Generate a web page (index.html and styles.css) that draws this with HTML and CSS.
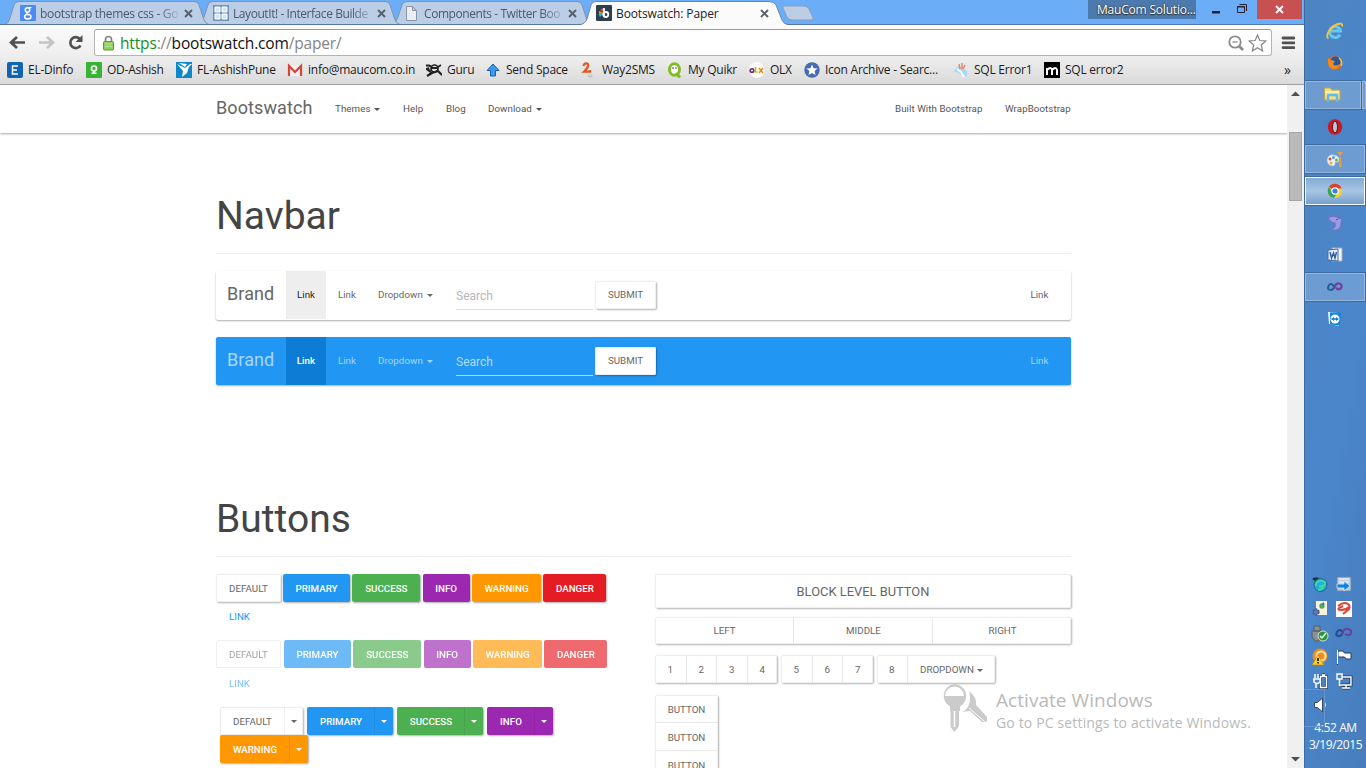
FILE: index.html
```html
<!DOCTYPE html>
<html lang="en">
<head>
<meta charset="utf-8">
<title>Bootswatch: Paper</title>
<link rel="stylesheet" href="styles.css">
</head>
<body>
<div class="desktop">
<div class="window">
  <header class="tabstrip">
    <svg class="tab-shapes" width="1304" height="27" viewBox="0 0 1304 27">
      <g fill="#bbcee6" stroke="#7b93b4">
        <path d="M392 24.5Q396 23 398 17L402 5Q403 1.5 407 1.5H577Q581 1.5 582 5L587 20Q588 24 592 24.5Z"/>
        <path d="M198 24.5Q202 23 204 17L208 5Q209 1.500 213 1.500H385Q389 1.500 390 5L395 20Q397 24 400 24.500Z"/>
        <path d="M5 24.5Q9 23 10 18L14 5Q15 1.500 19 1.500H194Q198 1.500 199 5L204 20Q206 24 209 24.500Z"/>
        <path d="M783 8Q782 6 785 6H803Q807 6 809 9L813 18Q814 20 811 20H793Q788 20 787 17Z" stroke="#8aa0bd"/>
      </g>
      <path d="M0 24.500H1304" stroke="#5578a8"/>
      <path d="M580 27V25Q585 24 587 19L591 5Q592 1.500 596 1.500H769Q774 1.500 776 5L782 20Q784 24 788 25V27Z" fill="#fbfbfb"/>
      <path d="M580 24.500Q585 24 587 19L591 5Q592 1.500 596 1.500H769Q774 1.500 776 5L782 20Q784 24.500 788 24.500" fill="none" stroke="#6a86ab"/>
    </svg>
    <div class="tab t1"><svg width="16" height="16"><rect width="16" height="16" rx="1" fill="#4c8bf5"/><g fill="none" stroke="#fff" stroke-width="1.500"><circle cx="7.500" cy="5" r="2.200"/><ellipse cx="7.800" cy="11.700" rx="3.200" ry="2.200"/><path d="M8.500 2.700h3M7 7.500q-1 1 1.500 2" stroke-width="1.200"/></g></svg><span>bootstrap themes css - Go</span><svg class="x" width="9" height="9"><path d="M1 1l7 7M8 1l-7 7"/></svg></div>
    <div class="tab t2"><svg width="16" height="16"><rect x=".5" y=".5" width="15" height="15" fill="#6f94bc" stroke="#7394b5"/><path d="M2 2h5v5H2zM9 2h5v5H9zM2 9h5v5H2zM9 9h5v5H9z" fill="#d5e5f5" stroke="#fff"/></svg><span>LayoutIt! - Interface Builde</span><svg class="x" width="9" height="9"><path d="M1 1l7 7M8 1l-7 7"/></svg></div>
    <div class="tab t3"><svg width="16" height="16"><path d="M2.500 1.500h6l4 4v10h-10zM8.500 1.500v4h4" fill="#e9eef5" stroke="#8a94a2"/></svg><span>Components - Twitter Boo</span><svg class="x" width="9" height="9"><path d="M1 1l7 7M8 1l-7 7"/></svg></div>
    <div class="tab t4"><svg width="16" height="16"><rect width="16" height="16" rx="1" fill="#2c3e50"/><path d="M7 3v4L4 5z" fill="#e84c3d"/><path d="M3 6l5 2-5 1z" fill="#f39c12"/><path d="M2.500 9l5-.5L4 12z" fill="#3eb0e8"/><path d="M8 3v9" stroke="#fff" stroke-width="1.800"/><circle cx="9.800" cy="9.500" r="2.500" fill="none" stroke="#fff" stroke-width="1.800"/></svg><span>Bootswatch: Paper</span><svg class="x" width="9" height="9"><path d="M1 1l7 7M8 1l-7 7"/></svg></div>
    <div class="profile">MauCom Solutio...</div>
    <svg class="winctl" width="55" height="19"><path d="M12 11h8v2.500h-8z" fill="#223"/><path d="M37.500 6.500h7v6h-7zM37 7h8M39.500 4.500h7V11" fill="none" stroke="#223"/></svg>
    <div class="close"><svg width="9" height="9"><path d="M1 1l7 7M8 1l-7 7" stroke="#fff" stroke-width="1.900"/></svg></div>
  </header>

  <div class="toolbar">
    <svg width="94" height="30" viewBox="0 0 94 30" fill="none">
      <path d="M11 15.500h14M17 10l-6 5.500 6 5.500" stroke="#505050" stroke-width="2.700"/>
      <path d="M39 15.500h13M47 10l6 5.500-6 5.500" stroke="#c3c3c3" stroke-width="2.700"/>
      <path d="M80.500 18.500a5.500 5.500 0 1 1-.5-6.500" stroke="#505050" stroke-width="2.700"/><path d="M82.500 8v7h-7z" fill="#505050"/>
    </svg>
    <div class="omnibox">
      <svg width="13" height="16"><path d="M3.500 8V4.500a3 3 0 0 1 6 0V8" fill="none" stroke="#858585" stroke-width="1.700"/><rect x="1.500" y="6.500" width="10" height="8.500" rx="1" fill="#8fd05e" stroke="#529f35"/><path d="M3 9h7M3 11.500h7" stroke="#b7e994"/></svg>
      <span class="url"><b>https</b><i>://</i>bootswatch.com<i>/paper/</i></span>
      <svg class="omni-icons" width="44" height="22" fill="none"><g stroke="#8b8b8b"><circle cx="11" cy="10" r="5.700" stroke-width="1.800"/><path d="M15 14l4 4" stroke-width="2.800"/><path d="M8.500 10h5" stroke-width="1.300"/></g><path d="M33.500 3l2.300 5.500 6 .5-4.500 4 1.300 6-5.100-3.200-5.100 3.200 1.300-6-4.500-4 6-.5z" fill="#fff" stroke="#858585" stroke-width="1.200"/></svg>
    </div>
    <svg class="menu" width="14" height="14"><path d="M2 2h11M2 6.800h11M2 11.600h11" stroke="#515151" stroke-width="2.800" stroke-linecap="round"/></svg>
  </div>

  <nav class="bookmarks">
    <a><svg width="16" height="16"><rect width="16" height="16" rx="2" fill="#0f65b0"/><path d="M11 4H5.500v8H11M5.500 8H10" fill="none" stroke="#fff" stroke-width="1.500"/></svg>EL-Dinfo</a>
    <a><svg width="16" height="16"><rect width="16" height="16" rx="1" fill="#38b335"/><circle cx="8" cy="6.500" r="2.500" fill="none" stroke="#fff" stroke-width="1.600"/><path d="M5.500 11.300h5M8 9v2" stroke="#fff" stroke-width="1.500"/></svg>OD-Ashish</a>
    <a><svg width="16" height="16"><rect width="16" height="16" fill="#0c87c9"/><path d="M1 2l8 4 5-4h2l-3 3-2 6-5 4 1-6zM3 1l6 4 2-3z" fill="#fff"/></svg>FL-AshishPune</a>
    <a><svg width="16" height="16"><path d="M1 3h14v11H1z" fill="#f2f2f2"/><path d="M2 14V4l6 6 6-6v10" fill="none" stroke="#d84437" stroke-width="2.200"/></svg>info@maucom.co.in</a>
    <a><svg width="16" height="16" fill="none" stroke="#222"><path d="M0 3.500h3l2 1M3 12l9-3 4 4M1 14l5-3M3 6l-2 1 4 3" stroke-width="2.200"/><circle cx="8.500" cy="6.500" r="3.500" stroke-width="1.700"/><path d="M5 6h7M12 5l3-2" stroke-width="1.800"/></svg>Guru</a>
    <a><svg width="16" height="16"><path d="M8 2l6 6.500h-3.500V14h-5V8.500H2z" fill="#3d98ee" stroke="#1764b4"/></svg>Send Space</a>
    <a><svg width="16" height="16"><path d="M2.500 4Q3 1.300 5 1.300 8 1.300 7 4.500 6 7 3 9.700H9V8" fill="none" stroke="#e2581d" stroke-width="2.200"/><path d="M7 12l4 1 1 2-3 1-2-1z" fill="#c5c9c8"/></svg>Way2SMS</a>
    <a><svg width="16" height="16"><ellipse cx="7.500" cy="7.500" rx="5" ry="5.700" fill="#fff" stroke="#83bd25" stroke-width="3"/><circle cx="6" cy="6" r=".7"/><circle cx="9" cy="6" r=".7"/><path d="M9 11l4 4.500" stroke="#83bd25" stroke-width="3"/></svg>My Quikr</a>
    <a><svg width="16" height="16"><circle cx="8" cy="8" r="7.700" fill="#fff"/><g fill="none" stroke-width="1.600"><circle cx="3" cy="8.500" r="1.800" stroke="#61297e"/><path d="M6.500 5v5h2" stroke="#b4be25"/><path d="M10 6l4 5M14 6l-4 5" stroke="#ed8b19"/></g></svg>OLX</a>
    <a><svg width="16" height="16"><circle cx="8" cy="8" r="7.700" fill="#466bb1"/><path d="M8 2.500l1.600 3.700 4 .3-3 2.600.9 4L8 11l-3.500 2.100.9-4-3-2.600 4-.3z" fill="#fff"/></svg>Icon Archive - Searc...</a>
    <a><svg width="16" height="16"><path d="M1 9l4-5 5 1 4 5v5l-5-2z" fill="#a5d9f5"/><path d="M6 2l1 5M9 1v6M12 3L10 7" stroke="#ef835e" stroke-width="1.400"/><path d="M4 7l4 3 3 5" stroke="#fff" stroke-width="2" fill="none"/></svg>SQL Error1</a>
    <a><svg width="16" height="16"><rect width="16" height="16"/><path d="M3 13V6M3 8q4-4 5 0v5M8 8q4-4 5 0v5" fill="none" stroke="#fff" stroke-width="2"/></svg>SQL error2</a>
    <span class="more">»</span>
  </nav>

  <div class="viewport">
    <div class="page">
      <div class="topnav"><div class="container topnav-in">
        <span class="brand">Bootswatch</span>
        <a class="n1">Themes<i class="caret"></i></a><a class="n2">Help</a><a class="n3">Blog</a><a class="n4">Download<i class="caret"></i></a>
        <a class="r1">Built With Bootstrap</a><a>WrapBootstrap</a>
      </div></div>
      <main class="container">
        <h1>Navbar</h1>
        <div class="navbar">
          <span class="brand">Brand</span><a class="active">Link</a><a class="l2">Link</a><a class="dd">Dropdown<i class="caret"></i></a><span class="search">Search</span><span class="btn default submit">SUBMIT</span><a class="last">Link</a>
        </div>
        <div class="navbar inverse">
          <span class="brand">Brand</span><a class="active">Link</a><a class="l2">Link</a><a class="dd">Dropdown<i class="caret"></i></a><span class="search">Search</span><span class="btn default submit">SUBMIT</span><a class="last">Link</a>
        </div>
        <h1 class="second">Buttons</h1>
        <div class="columns">
          <section class="left">
            <div class="row"><span class="btn default w65">DEFAULT</span><span class="btn primary w67">PRIMARY</span><span class="btn success w68">SUCCESS</span><span class="btn info w47">INFO</span><span class="btn warning w69">WARNING</span><span class="btn danger w63">DANGER</span></div>
            <div class="link">LINK</div>
            <div class="row disabled"><span class="btn default w65">DEFAULT</span><span class="btn primary w67">PRIMARY</span><span class="btn success w68">SUCCESS</span><span class="btn info w47">INFO</span><span class="btn warning w69">WARNING</span><span class="btn danger w63">DANGER</span></div>
            <div class="link faded">LINK</div>
            <div class="splits">
              <span class="split default"><b class="w64">DEFAULT</b><em><i class="caret"></i></em></span>
              <span class="split primary"><b class="w67">PRIMARY</b><em><i class="caret"></i></em></span>
              <span class="split success"><b class="w67">SUCCESS</b><em><i class="caret"></i></em></span>
              <span class="split info"><b class="w47">INFO</b><em><i class="caret"></i></em></span>
              <span class="split warning"><b class="w69">WARNING</b><em><i class="caret"></i></em></span>
            </div>
          </section>
          <section class="right">
            <div class="btn default block">BLOCK LEVEL BUTTON</div>
            <div class="group justified"><span>LEFT</span><span>MIDDLE</span><span>RIGHT</span></div>
            <div class="groups"><div class="group"><span>1</span><span>2</span><span>3</span><span>4</span></div><div class="group"><span>5</span><span>6</span><span>7</span></div><div class="group"><span>8</span><span class="wide">DROPDOWN<i class="caret"></i></span></div></div>
            <div class="group vertical"><span>BUTTON</span><span>BUTTON</span><span>BUTTON</span></div>
          </section>
        </div>
      </main>
    </div>
    <div class="scrollbar"><svg width="17" height="17"><path d="M4 11h9L8.500 6.500z" fill="#505050"/></svg><div class="thumb"></div><svg width="17" height="17"><path d="M4 6h9l-4.500 4.500z" fill="#505050"/></svg></div>
  </div>
</div>

<aside class="taskbar">
  <div class="task"><svg width="18" height="18" viewBox="0 0 18 18"><path d="M14 12.500A5.500 5.500 0 1 1 14.500 9H5" fill="none" stroke="#65c8f3" stroke-width="3"/><path d="M2.500 16.500C-1.500 14 4 5 12 2q5-1.500 4 2.500" fill="none" stroke="#f4c53c" stroke-width="1.900"/></svg></div>
  <div class="task"><svg width="16" height="16"><circle cx="8" cy="8" r="7" fill="#e66b16"/><circle cx="8.500" cy="6.500" r="5" fill="#245996"/><path d="M1 3l3 2 4 1-2 3q2 3 7 0-2 5-7 5Q0 13 1 3" fill="#f28a20"/><path d="M12 3q4 3 2 8" stroke="#f9c440" stroke-width="1.500" fill="none"/></svg></div>
  <div class="task-pair"><div class="task open stacked"><svg width="18" height="16"><path d="M1.500 2q0-1 1-1H7l2 2h7q1 0 1 1v9h-15.500z" fill="#f4dc84" stroke="#c6a44b"/><path d="M2 5h14" stroke="#fff4bb" stroke-width="2"/><path d="M5 15V9q0-1 1-1h7q1 0 1 1v6" fill="none" stroke="#63bae6" stroke-width="2.500"/></svg></div><div class="sliver"></div></div>
  <div class="task"><svg width="16" height="18"><ellipse cx="8" cy="9" rx="7.200" ry="7.800" fill="#c51c22"/><ellipse cx="8" cy="9" rx="2.500" ry="5.700" fill="#b5c9df" stroke="#8b090f"/></svg></div>
  <div class="task open"><svg width="18" height="17"><path d="M1 9Q2 3 8 4t5 6q-1 2-4 1 1 4-3 4-5-1-5-6z" fill="#eaf2f2" stroke="#a9bdc5" stroke-width=".7"/><g><circle cx="4" cy="8" r="1.500" fill="#d05142"/><circle cx="7.500" cy="6.500" r="1.500" fill="#4b9eda"/><circle cx="10.500" cy="9" r="1.500" fill="#66b44c"/><circle cx="5" cy="12" r="1.500" fill="#e7b530"/></g><path d="M13.500 6l-.5 10h2.500l-.5-10zM11 1l3 4 3-4z" fill="#eb9d42"/></svg></div>
  <div class="task open current"><svg width="16" height="16"><circle cx="8" cy="8" r="7" fill="#f9ce2e"/><path d="M8 8L2 4a7 7 0 0 1 12.500 1.500H8z" fill="#df3f31"/><path d="M2 4a7 7 0 0 0 5 11l3-5-4.500-1z" fill="#36a25b"/><circle cx="8" cy="8" r="3.200" fill="#3e7de3" stroke="#fff" stroke-width="1.200"/></svg></div>
  <div class="task"><svg width="16" height="16"><path d="M1 3q6-4 12 1l2-1-1 5q0 6-5 7H3q7-2 5-7-4 0-7-5z" fill="#9a9be3" stroke="#7472bd"/><circle cx="10" cy="4.500" r=".8" fill="#454384"/></svg></div>
  <div class="task"><svg width="16" height="16"><path d="M5 1h10v13H5z" fill="#f2f5fa" stroke="#a0adc2"/><path d="M1 3l10-1v12L1 13z" fill="#e9effa" stroke="#456aa3"/><path d="M3 5l1.500 6L6.500 6 8 11 9.500 5" fill="none" stroke="#315da5" stroke-width="1.500"/></svg></div>
  <div class="task open"><svg width="16" height="10" fill="none"><path d="M7 4Q3 0 1.500 4T4 8q2 0 4-4" stroke="#226198" stroke-width="2"/><path d="M7 6q2-5 5-4.500T14.500 5Q13 9 9 6" stroke="#753d9b" stroke-width="2.200"/></svg></div>
  <div class="task"><svg width="16" height="16"><path d="M1 1l11 1v13L2 13z" fill="#eaf6fd"/><path d="M3 1.500h11l-1 13-10-1z" fill="#1385dd"/><circle cx="8" cy="8" r="4.500" fill="#fff"/><path d="M4 8l3-2v1.300h2V6l3 2-3 2V8.700H7V10z" fill="#1778ca"/></svg></div>

  <div class="tray">
    <svg width="18" height="18"><circle cx="9.500" cy="9" r="6.500" fill="#22aedb" stroke="#166a83"/><path d="M5 10q0-5 5-5t4 3q-1 3-6 2M7 14q3 0 5-3" fill="none" stroke="#45dd9a" stroke-width="1.700"/><path d="M1 3q3-3 7-1L4 5z" fill="#20333c"/></svg>
    <svg width="18" height="18"><path d="M2 1h14v14H2z" fill="#bccddf" stroke="#6686aa"/><path d="M4 3h10M4 6h10" stroke="#fff"/><path d="M2 8h7V5l6 5-6 5v-3H2z" fill="#1485dd" stroke="#e8f5ff" stroke-width=".7"/></svg>
    <svg width="18" height="18"><path d="M5 1h11v14H5z" fill="#f5f3da"/><circle cx="11" cy="6" r="2.700" fill="#56a953"/><path d="M11 5l2-2" stroke="#3579d1" stroke-width="2"/><circle cx="5" cy="12" r="2.800" fill="#6475bc" stroke="#435397" stroke-dasharray="2 1" stroke-width="1.700"/></svg>
    <svg width="18" height="18"><rect x="1" y="1" width="16" height="16" fill="#fff"/><path d="M3 6Q8 2 12 3.500t2 5.500L8 14M14 7q-3 3-8 3-4 0-2-2l4-2" fill="none" stroke="#df4437" stroke-width="2"/></svg>
    <svg width="18" height="18"><path d="M3 2h6v5H3zM1 7h9v6l-3 4H4l-3-4z" fill="#8b8f94" stroke="#555e68"/><circle cx="12" cy="12" r="5" fill="#2a9636" stroke="#c9eac9"/><path d="M9 12l2 2 4-5" fill="none" stroke="#fff" stroke-width="1.500"/></svg>
    <svg width="18" height="18" fill="none"><path d="M8 8q-4-4-6 0t2 4q3 0 4-4" stroke="#244d8d" stroke-width="2"/><path d="M7 10q2-6 6-5t3 4q-1 4-6 1" stroke="#6b3e9f" stroke-width="2"/></svg>
    <svg width="18" height="18"><circle cx="9" cy="8" r="7.500" fill="#ed8e1a"/><circle cx="10" cy="8" r="4.500" fill="none" stroke="#ffe1ac" stroke-width="2"/><path d="M7 7l6 10H1z" fill="#f9cf25" stroke="#b97700" stroke-width=".5"/><path d="M7 10v3M7 14v1.500" stroke="#111" stroke-width="1.600"/></svg>
    <svg width="18" height="18" fill="none"><path d="M2.500 2v15M3 3h5q1 3 4 2h4v6h-5q-1-3-4-2H3z" fill="#fff" stroke="#283a52"/><path d="M2.500 2v14" stroke="#fff"/></svg>
    <svg width="18" height="18" fill="none"><path d="M9.500 4.500h6v11h-6zM11 3h3" stroke="#243a55" stroke-width="3"/><path d="M9.500 4.500h6v11h-6zM11 3h3M4 2v4M7 2v4M2 7h7v3q-3 3-6 0V7M5 11v5" stroke="#fff" stroke-width="1.500"/></svg>
    <svg width="18" height="18" fill="none"><path d="M7 5h9v8H5M11 13v3M7 16h8" stroke="#243a55" stroke-width="3"/><path d="M7 5h9v8H5M11 13v3M7 16h8M2 2h5v5H2zM4.500 7v7" stroke="#fff" stroke-width="1.400"/></svg>
    <svg width="18" height="18" fill="none"><path d="M3.500 6.500h3l5-4.500v14l-5-4.500h-3z" fill="#fff" stroke="#344a66"/><path d="M13.500 6q2 3 0 6" stroke="#e4edf8"/></svg>
    <i class="ghost"></i>
  </div>
  <div class="clock"><span>4:52 AM</span><span>3/19/2015</span></div>
</aside>

<div class="watermark">
  <svg width="48" height="50"><g fill="#cbcbcb"><path d="M27 7q8 6 7 14l11 12v5h-5l-12-11-8 1q6-3 7-8 2-7 0-13z"/><path d="M27 24l16 14" stroke="#fff" stroke-width="1"/><path fill-rule="evenodd" d="M12.500 0A12 12 0 0 1 18 22.500V27h-1v15l-4.500 6-4-5V27H8v-4.500A12 12 0 0 1 12.500 0zM3 12H22A9.500 9.500 0 0 0 3 12z"/><path d="M12.500 27v16" stroke="#fff" stroke-width="1.500"/></g></svg>
  <div><p class="wm1">Activate Windows</p><p class="wm2">Go to PC settings to activate Windows.</p></div>
</div>
</div>
</body>
</html>
```
FILE: styles.css
```css
* { box-sizing: border-box; }
body { margin: 0; overflow: hidden; font-family: Roboto, sans-serif; }
.desktop { position: relative; display: flex; width: 1366px; height: 768px; overflow: hidden; }
.window { display: flex; flex-direction: column; width: 1304px; height: 768px; background: #fff; }
svg { flex: none; display: block; }

.tabstrip { position: relative; display: flex; height: 25px; background: #6badf6; font: 12px "Open Sans", sans-serif; }
.tab-shapes { position: absolute; left: 0; top: 0; }
.tab { position: relative; display: flex; align-items: center; height: 26px; padding-left: 20px; color: #4c5968; letter-spacing: -.43px; }
.tab span { margin-left: 4px; width: 140px; flex: none; white-space: nowrap; -webkit-mask-image: linear-gradient(90deg, #000 85%, rgba(0,0,0,.1)); mask-image: linear-gradient(90deg, #000 85%, rgba(0,0,0,.1)); }
.tab .x { margin-left: 4px; }
.x path { stroke: #56606c; stroke-width: 1.9; }
.t1 { width: 193px; letter-spacing: -.33px; }
.t2 { width: 191px; }
.t3 { width: 192px; }
.t4 { width: 193px; padding-left: 20px; color: #222; letter-spacing: -.12px; }
.t4 span { -webkit-mask-image: none; mask-image: none; }
.profile { position: relative; margin-left: 319px; width: 108px; height: 19px; padding-left: 9px; background: #4d7aae; color: #fff; line-height: 19px; text-shadow: 0 0 2px #222, 0 1px 1px #333; white-space: nowrap; letter-spacing: -.2px; }
.winctl { position: relative; margin-left: 4px; }
.close { position: relative; margin-left: 2px; width: 45px; height: 19px; display: flex; justify-content: center; align-items: center; background: #c75050; }

.toolbar { position: relative; display: flex; align-items: flex-start; height: 33px; padding-top: 2px; background: linear-gradient(#fbfbfb, #ededed); }
.omnibox { display: flex; align-items: center; width: 1178px; height: 27px; margin-top: 2px; padding: 0 3px 0 7px; border: 1px solid #b4b4b4; border-top-color: #9c9c9c; border-radius: 3px; background: #fff; }
.url { margin-left: 5px; font: 15.5px/20px "Open Sans", sans-serif; color: #111; letter-spacing: -.16px; }
.url b { font-weight: 400; color: #158f15; }
.url i { font-style: normal; color: #858585; }
.omni-icons { margin-left: auto; }
.menu { margin: 9px 0 0 9px; }

.bookmarks { display: grid; grid-template-columns: 79px 90px 111px 139px 59px 96px 86px 82px 55px 149px 91px 240px auto; height: 27px; padding: 0 0 3px 7px; background: linear-gradient(#ededed, #dadada); border-bottom: 1px solid #a1a1a1; align-items: center; font: 12px "Open Sans", sans-serif; color: #1c1c1c; letter-spacing: -.24px; white-space: nowrap; }
.bookmarks a { display: flex; align-items: center; gap: 5px; }
.more { font-size: 14px; margin-top: -1px; }

.viewport { display: flex; height: 683px; }
.page { width: 1287px; overflow: hidden; background: #fff; }
.scrollbar { display: flex; flex-direction: column; width: 17px; background: #f0f0f0; }
.thumb { margin: 30px 2px 541px; width: 13px; height: 69px; flex: none; background: #bababa; border: 1px solid #a5a5a5; }
.scrollbar svg + .thumb + svg { margin-top: 9px; }
.container { width: 855px; margin-left: 216px; }
.topnav { height: 48px; background: #fff; box-shadow: 0 1px 2px rgba(0,0,0,.35); }
.topnav-in { display: flex; align-items: center; height: 47px; font-size: 9.75px; color: #555; letter-spacing: .06px; }
.brand { font-size: 18px; color: #666; }
.topnav a { white-space: nowrap; }
.topnav .brand { width: 119px; margin-top: -2px; letter-spacing: .1px; }
.n1 { width: 68px; }
.n2 { width: 43px; }
.n3 { width: 42px; }
.n4 { width: 407px; }
.r1 { width: 110px; }
.caret { display: inline-block; width: 0; height: 0; margin-left: 3px; vertical-align: 1px; border: 3px solid transparent; border-top-color: currentColor; border-bottom: 0; }
.topnav .caret, .dd .caret { margin-left: 4px; }

h1 { margin: 0 0 17px; padding-top: 58px; height: 121px; border-bottom: 1px solid #eee; font-size: 39px; line-height: 50px; font-weight: 400; color: #444; }
h1.second { margin-top: 51px; }
.navbar { display: flex; align-items: center; height: 49px; margin-bottom: 17px; padding-left: 11px; border-radius: 2px; box-shadow: 0 1px 2px rgba(0,0,0,.32); font-size: 9.75px; color: #666; }
.navbar .brand { width: 59px; margin-top: -4px; letter-spacing: .1px; }
.navbar .active { width: 40px; height: 48px; line-height: 48px; text-align: center; background: #eee; color: #212121; align-self: flex-start; }
.l2, .dd, .last { margin-top: -2px; }
.l2 { width: 52px; padding-left: 12px; }
.dd { width: 78px; letter-spacing: .05px; }
.search { width: 137px; height: 29px; padding-top: 6px; font-size: 12px; line-height: 19px; color: #b8b8b8; border-bottom: 1px solid #ddd; }
.submit { width: 61px; margin-left: 2px; margin-top: -1px; }
.last { margin-left: 374.5px; }
.inverse { height: 48px; background: #2196f3; color: #a9d7fb; }
.inverse .brand { color: #a9d7fb; margin-top: -3px; }
.inverse .active { background: #0c7cd5; color: #fff; font-weight: 500; }
.inverse .search { color: #b2dbfb; border-color: #b2dbfb; }
.inverse .submit { margin-top: 0; }

.btn, .split, .group { height: 28px; border-radius: 2px; box-shadow: 1px 1px 2px rgba(0,0,0,.32); font-size: 9.75px; font-weight: 500; color: #fff; }
.btn { display: block; flex: none; text-align: center; line-height: 28px; }
.default, .group { background: #fff; color: #666; font-weight: 400; box-shadow: 0 0 0 1px #eee inset, 1px 1px 2px rgba(0,0,0,.3); }
.primary { background: #2196f3; }
.success { background: #4caf50; }
.info { background: #9c27b0; }
.warning { background: #ff9800; }
.danger { background: #e51c23; }
.w64 { width: 64px; }
.w65 { width: 65px; }
.w67 { width: 67px; }
.w68 { width: 68px; }
.w47 { width: 47px; }
.w69 { width: 69px; }
.w63 { width: 63px; }
.columns { display: flex; }
.left { width: 439px; }
.right { width: 416px; }
.row { display: flex; gap: 2.35px; }
.row .btn { line-height: 29px; }
.row .default { margin-right: -.35px; }
.disabled .btn { opacity: .65; box-shadow: none; }
.disabled .default { margin-right: .65px; opacity: .6; box-shadow: 0 0 0 1px #e5e5e5 inset; }
.link { height: 38px; padding: 0 13px; font-size: 9.75px; line-height: 29px; color: #2196f3; }
.link.faded { height: 39px; line-height: 31px; opacity: .6; }
.splits { display: flex; flex-wrap: wrap; column-gap: 4px; padding: 0 50px 0 4px; }
.split { display: flex; line-height: 29px; }
.split b { font-weight: inherit; text-align: center; padding-left: 1px; }
.split em { width: 19px; padding-right: 1px; border-left: 1px solid rgba(0,0,0,.06); text-align: center; }
.split .caret { margin: 0; vertical-align: 2px; }
.block { height: 34px; font-size: 12.9px; line-height: 35px; }
.group { display: flex; line-height: 28px; text-align: center; }
.group span { width: 30.5px; border-left: 1px solid #e8e8e8; }
.group span:first-child { border-left: 0; }
.groups .group { line-height: 29px; }
.justified { margin: 9px 0 11px; line-height: 27px; height: 27px; }
.justified span { flex: 1; padding-left: 1px; }
.groups { display: flex; gap: 4px; }
.group .wide { width: 88px; }
.vertical { display: block; width: 63px; height: 84px; margin-top: 12px; line-height: 29px; }
.vertical span { display: block; width: 63px; height: 28px; border-left: 0; border-bottom: 1px solid #e8e8e8; }

.taskbar { width: 62px; padding-top: 17px; background: linear-gradient(100deg, #4d84c2, #4b86cb 55%, #477dbb); box-shadow: inset 1px 0 #3c6b9f; }
.task { display: flex; align-items: center; justify-content: center; width: 60px; height: 28px; margin: 0 0 4px 1px; border: 1px solid transparent; }
.open { border-color: #98b9dd; background: rgba(255,255,255,.19); box-shadow: 0 0 0 1px #3b6a9e; }
.task-pair { display: flex; gap: 1px; }
.stacked { width: 56px; padding-right: 2px; }
.sliver { width: 4px; height: 28px; border: 1px solid #98b9dd; background: #7099cc; }
.current { border-color: #f6fbff; background: linear-gradient(#85abd4, #a8c5e3 50%, #77a1cf); }
.tray { position: relative; display: grid; grid-template-columns: 24px 24px; grid-auto-rows: 24px; height: 143px; margin: 243px 0 0 7px; }
.ghost { position: absolute; left: -7px; top: 113px; width: 21px; height: 38px; border: 1px solid #6594cd; border-left: 0; }
.clock { display: flex; flex-direction: column; align-items: center; padding-left: 1px; font: 12px/17px "Open Sans", sans-serif; color: #fff; letter-spacing: -.4px; }
.watermark { position: absolute; left: 942px; top: 684px; display: flex; color: #b9b9b9; font-family: "Open Sans", sans-serif; font-weight: 400; white-space: nowrap; }
.watermark div { margin-left: 6px; }
.watermark p { margin: 0; }
.wm1 { font-size: 19px; line-height: 32px; letter-spacing: .05px; }
.wm2 { font-size: 14px; line-height: 14px; letter-spacing: .15px; }
```
